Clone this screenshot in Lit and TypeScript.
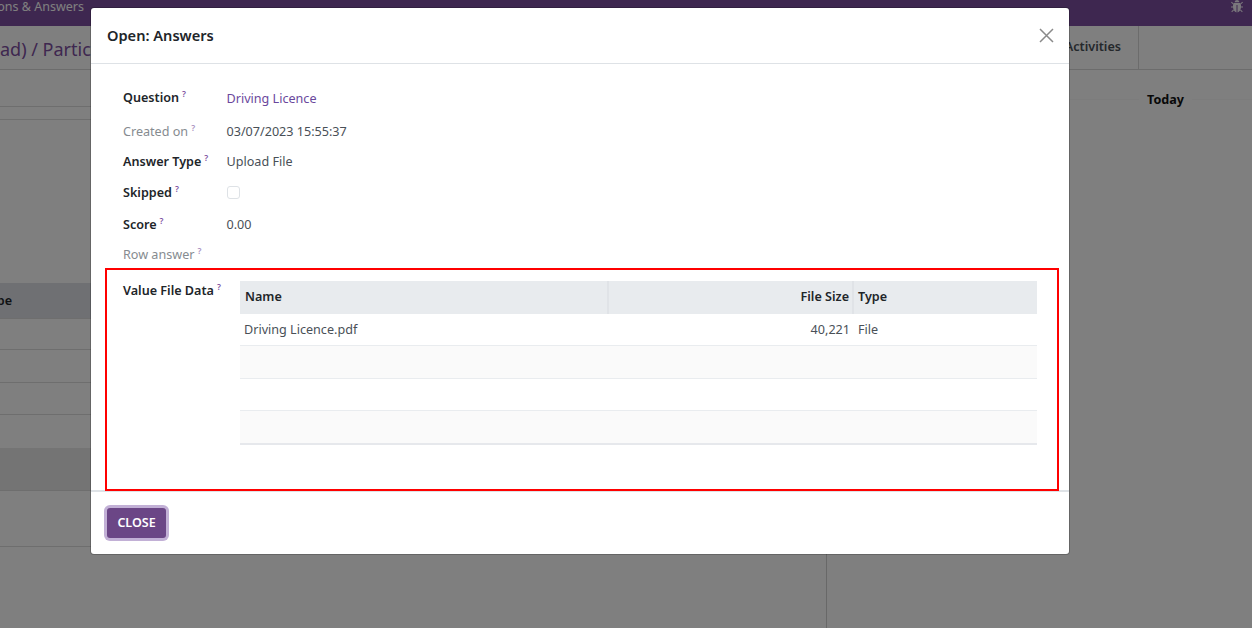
import { LitElement, html, css } from "lit";
import { customElement } from "lit/decorators.js";

@customElement("app-root")
export class AppRoot extends LitElement {
  static styles = css`
    :host { display: block; position: relative; width: 1252px; height: 628px; overflow: hidden; background: #fff;
      font-family: "Noto Sans", "Open Sans", sans-serif; font-size: 12.6px; color: #495057; }
    * { box-sizing: border-box; }
    .nav { height: 26px; background: #7c4ea0; display: flex; justify-content: space-between; color: #fff; }
    .nav-title { margin-left: -41px; font-size: 12.5px; line-height: 13px; white-space: nowrap; }
    .bug { margin: 0 9px 0 0; width: 12px; height: 13px; color: #f4eef8; }
    .panel { height: 44px; border-bottom: 1px solid #d8d8d8; display: flex; justify-content: space-between; }
    .crumb { font-size: 18px; line-height: 46px; color: #7c4ea0; margin-left: 0; white-space: nowrap; }
    .tab { width: 114px; margin-right: 113px; padding-right: 17px; border-right: 1px solid #d8d8d8; text-align: right; line-height: 42px; font-weight: 600; color: #495057; }
    .main { display: flex; height: 558px; }
    .left { width: 827px; border-right: 1px solid #d0d0d0; display: grid;
      grid-template-rows: 37px 13px 163px 36px 31px 33px 32px 33px 43px 56px 1fr; }
    .left > div { border-bottom: 1px solid #dcdcdc; }
    .left > .plain { border-bottom: 0; }
    .head { background: #dfe0e6; font-weight: 600; color: #212529; line-height: 35px; overflow: hidden; white-space: nowrap; }
    .head span { display: block; margin-left: -17px; }
    .band { background: #e9e9e9; }
    .right { flex: 1; display: flex; align-items: flex-start; padding-top: 21px; }
    .day { display: flex; align-items: center; width: 100%; font-weight: 700; color: #111; gap: 8px; }
    .day i { display: block; height: 1px; background: #f9f9f9; }
    .day i:first-child { width: 312px; }
    .day i:last-child { flex: 1; }
    .backdrop { position: absolute; inset: 0; background: rgba(0, 0, 0, 0.5); }
    .modal { position: absolute; left: 91px; top: 8px; width: 978px; height: 546px; background: #fff; border-radius: 3px;
      box-shadow: 0 0 0 1px rgba(0, 0, 0, 0.2); display: flex; flex-direction: column; }
    .m-head { height: 56px; flex: none; border-bottom: 1px solid #dee2e6; display: flex; align-items: center; justify-content: space-between; padding: 0 15px 0 16px; }
    .m-title { font-size: 14.6px; font-weight: 600; color: #212529; margin-top: -2px; }
    .close { width: 15px; height: 15px; color: #8a8a8a; display: block; }
    .m-body { flex: 1; padding-top: 18px; display: flex; flex-direction: column; }
    .form { display: grid; grid-template-columns: 103.5px 1fr; grid-template-rows: 33px 33px 27px 35px 29px 30px; padding-left: 32px; align-items: center; }
    .lab { font-weight: 600; color: #212529; white-space: nowrap; }
    .lab.first { margin-top: -2px; }
    .lab.muted { font-weight: 400; color: #868b90; }
    sup { font-size: 8.5px; font-weight: 600; color: #7c4ea0; line-height: 0; vertical-align: 5px; margin-left: 3px; }
    .muted sup { color: #a98fc0; }
    .val { white-space: nowrap; }
    .link { color: #6a479c; }
    .check { display: block; width: 13px; height: 13px; border: 1px solid #dee2e6; border-radius: 3px; background: #fff; }
    .red { position: relative; z-index: 1; height: 223px; margin: -1px 10px 0 14px; border: 2px solid #ff0000; padding: 11px 19px 0 16px; display: grid; grid-template-columns: 117px 1fr; flex: none; }
    .red .lab { padding-top: 1px; line-height: 18px; }
    table { width: 797px; align-self: start; border-collapse: collapse; table-layout: fixed; color: #495057; }
    col.c1 { width: 368px; }
    col.c2 { width: 245px; }
    col.c3 { width: 184px; }
    th { height: 33px; background: #e8ebee; color: #212529; font-weight: 600; text-align: left; padding: 0 4px 2px 5px; border-left: 2px solid #e0e3e7; }
    th:first-child { border-left: 0; }
    td { height: 33px; padding: 0 4px 2px; border-bottom: 1px solid #e9ecef; }
    tbody tr:nth-child(1) td { height: 31px; padding-bottom: 0; }
    tbody tr:nth-child(3) td { height: 32px; }
    tbody tr:nth-child(4) td { height: 34px; }
    tbody tr:nth-child(even) td { background: #fafafa; }
    tbody tr:last-child td { border-bottom: 2px solid #e6e8ec; }
    th.num, td.num { text-align: right; padding-right: 3px; }
    th.type { padding-left: 4px; }
    td.type { padding-left: 5px; }
    .m-foot { height: 64px; flex: none; border-top: 2px solid #dee2e6; padding: 16px 0 0 16px; margin-top: -1px; }
    button { display: block; width: 59px; height: 30px; border: 0; border-radius: 3px; background: #6b4686; color: #fff; font: 600 12.5px "Noto Sans", sans-serif;
      box-shadow: 0 0 0 3px #c2b0d6; padding: 0 0 2px; }
  `;

  render() {
    const rows = [["Driving Licence.pdf", "40,221", "File"], ["", "", ""], ["", "", ""], ["", "", ""]];
    return html`
      <div class="nav">
        <div class="nav-title">Questions &amp; Answers</div>
        <svg class="bug" viewBox="0 0 12 13" fill="currentColor" aria-hidden="true">
          <path d="M3.6 2.2C3.9 .9 4.8 0 6 0s2.1.9 2.4 2.2z" />
          <path d="M2.8 3h6.4c.6.9.9 2.1.9 3.6 0 3-1.6 5.4-3.6 5.9V5H5.5v7.5C3.5 12 1.900 9.600 1.900 6.600 1.900 5.100 2.200 3.900 2.800 3z" />
          <path d="M0 2.500l.7-.7 2 1.800-.7.700zM12 2.500l-.7-.7-2 1.800.7.700zM0 6.500h2v1H0zM10 6.500h2v1h-2zM.3 11.500l2-2 .7.700-2 2zM11.700 11.500l-2-2-.7.700 2 2z" />
        </svg>
      </div>
      <div class="panel">
        <div class="crumb">ad) / Participations</div>
        <div class="tab">Activities</div>
      </div>
      <div class="main">
        <div class="left">
          <div></div><div></div><div class="plain"></div>
          <div class="head"><span>Type</span></div>
          <div></div><div></div><div></div><div class="plain"></div>
          <div class="band"></div>
          <div></div>
          <div class="plain"></div>
        </div>
        <div class="right">
          <div class="day"><i></i><span>Today</span><i></i></div>
        </div>
      </div>
      <div class="backdrop"></div>
      <div class="modal">
        <div class="m-head">
          <div class="m-title">Open: Answers</div>
          <svg class="close" viewBox="0 0 15 15" fill="none" stroke="currentColor" stroke-width="1.500" aria-label="Close">
            <path d="M1 1l13 13M14 1L1 14" />
          </svg>
        </div>
        <div class="m-body">
          <div class="form">
            <div class="lab first">Question<sup>?</sup></div><div class="val link">Driving Licence</div>
            <div class="lab muted">Created on<sup>?</sup></div><div class="val">03/07/2023 15:55:37</div>
            <div class="lab">Answer Type<sup>?</sup></div><div class="val">Upload File</div>
            <div class="lab">Skipped<sup>?</sup></div><div class="val"><span class="check"></span></div>
            <div class="lab">Score<sup>?</sup></div><div class="val">0.00</div>
            <div class="lab muted">Row answer<sup>?</sup></div><div class="val"></div>
          </div>
          <div class="red">
            <div class="lab">Value File Data<sup>?</sup></div>
            <table>
              <colgroup><col class="c1" /><col class="c2" /><col class="c3" /></colgroup>
              <thead><tr><th>Name</th><th class="num">File Size</th><th class="type">Type</th></tr></thead>
              <tbody>
                ${rows.map(
                  (r) => html`<tr><td>${r[0]}</td><td class="num">${r[1]}</td><td class="type">${r[2]}</td></tr>`
                )}
              </tbody>
            </table>
          </div>
        </div>
        <div class="m-foot"><button>CLOSE</button></div>
      </div>
    `;
  }
}
